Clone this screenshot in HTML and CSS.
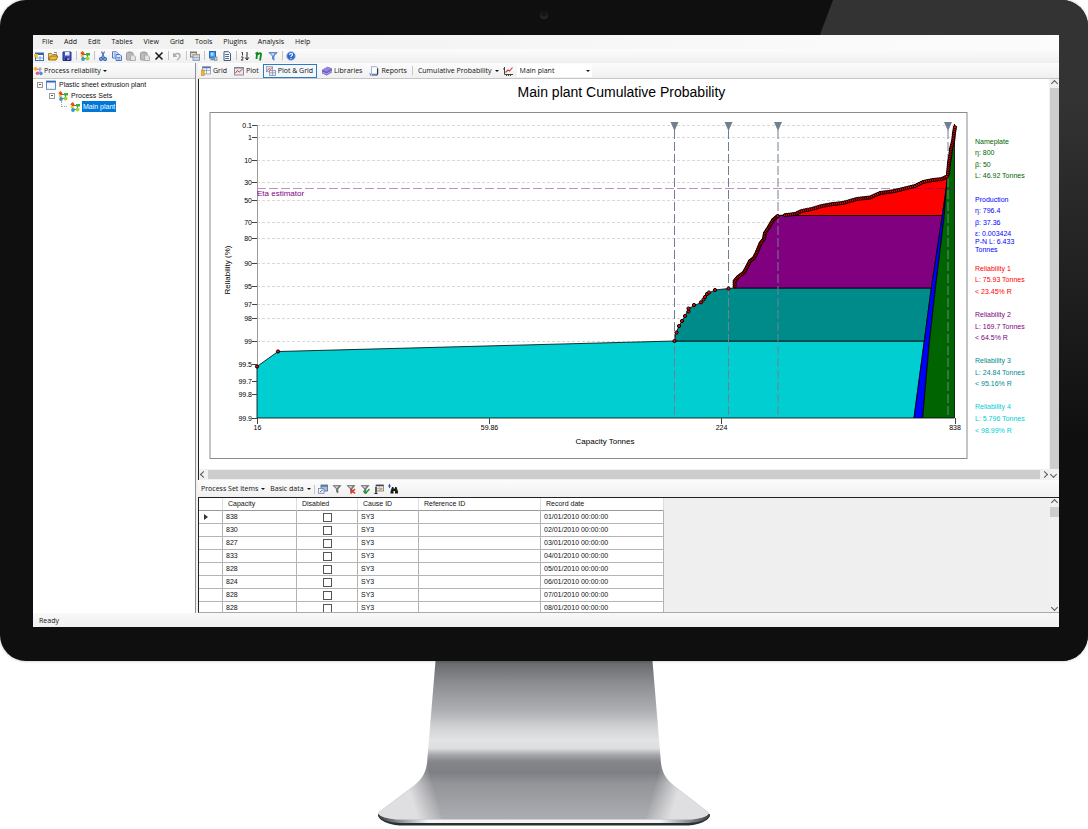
FILE: index.html
```html
<!DOCTYPE html>
<html lang="en">
<head>
<meta charset="utf-8">
<title>Process reliability</title>
<link rel="stylesheet" href="styles.css">
</head>
<body>
<svg class="sprite" aria-hidden="true">
  <symbol id="i-new" viewBox="0 0 10 10"><rect x="1.5" y="2" width="8" height="7.5" fill="#fff" stroke="#4a6fb0"/><path d="M1.5 3h8" stroke="#2f62b8" stroke-width="2"/><path d="M0 3h4v3H0z" fill="#f4c02c"/><path d="M6 5v4M2 7h7" stroke="#7d9dcc"/></symbol>
  <symbol id="i-open" viewBox="0 0 10 10"><path d="M.5 9V2.500h3l1 1h4V5" fill="#f3d27a" stroke="#8a6a1c" stroke-width=".8"/><path d="M.5 9l2-4h7.500l-2 4z" fill="#f7b92c" stroke="#7c5c14" stroke-width=".8"/><path d="M6 1.500h2.500v1" fill="none" stroke="#555" stroke-width=".7"/></symbol>
  <symbol id="i-save" viewBox="0 0 10 10"><path d="M1 1h8v8.500H1z" fill="#4a55c4" stroke="#252c86"/><path d="M3 1h4.500v3.500H3z" fill="#e8ecfa"/><path d="M3 6.500h4V9H3z" fill="#222a66"/><path d="M5.500 7h1v2h-1z" fill="#fff"/></symbol>
  <symbol id="i-flow" viewBox="0 0 10 10"><path d="M2.500 2.500v5h5M2.500 3.500h5v3" fill="none" stroke="#444" stroke-width=".8"/><path d="M2.500 0l2.200 2.200-2.200 2.200L.3 2.200z" fill="#f04a1e"/><rect x=".8" y="4" width="3" height="2" fill="#f6c21a"/><circle cx="3" cy="8" r="1.900" fill="#2a9bd8"/><rect x="6" y="2" width="4" height="2.500" fill="#38b43a"/><circle cx="7.500" cy="7.500" r="2" fill="#9bd43c"/></symbol>
  <symbol id="i-cut" viewBox="0 0 10 10"><path d="M3.500.5l3 6.500M6.500.5l-3 6.500" stroke="#4c6fae" stroke-width="1.200" fill="none"/><circle cx="3" cy="8" r="1.400" fill="none" stroke="#2458b8" stroke-width="1.200"/><circle cx="7" cy="8" r="1.400" fill="none" stroke="#2458b8" stroke-width="1.200"/></symbol>
  <symbol id="i-copy" viewBox="0 0 10 10"><path d="M.5.8h4l1.500 1.500v4.700H.5z" fill="#eaf1fc" stroke="#3d6cc0" stroke-width=".9"/><path d="M4 3.500h4l1.500 1.500v4.500H4z" fill="#dbe8fb" stroke="#3d6cc0" stroke-width=".9"/><path d="M5.300 6.500h3M5.300 8h3M1.800 3h2M1.800 5h1.500" stroke="#3d6cc0" stroke-width=".8"/></symbol>
  <symbol id="i-paste" viewBox="0 0 10 10"><rect x=".5" y="1.500" width="6.500" height="7.500" rx=".7" fill="#bdbdbd" stroke="#9c9c9c"/><rect x="2.200" y=".4" width="3" height="2" fill="#a8a8a8"/><path d="M4.500 4h3l2 2v3.500h-5z" fill="#e4e4e4" stroke="#a0a0a0" stroke-width=".8"/></symbol>
  <symbol id="i-del" viewBox="0 0 10 10"><path d="M1.500 1.500l7 7M8.500 1.500l-7 7" stroke="#1c1c1c" stroke-width="1.600"/></symbol>
  <symbol id="i-undo" viewBox="0 0 10 10"><path d="M2 4.500C4 1.500 8 2 8 5c0 2-1.500 3-3 4" fill="none" stroke="#a9adb5" stroke-width="1.500"/><path d="M1 1.500v4.500h4.500z" fill="#a9adb5"/></symbol>
  <symbol id="i-stack" viewBox="0 0 10 10"><rect x=".5" y="1" width="6" height="5" fill="#ddd" stroke="#777" stroke-width=".9"/><path d="M.5 1.500h6" stroke="#777"/><rect x="3" y="3.500" width="6.500" height="5.800" fill="#d2dcec" stroke="#7b8fae" stroke-width=".9"/><path d="M3 4h6.500" stroke="#d6b35a" stroke-width="1.200"/><path d="M3 6.500h6.500" stroke="#8b9fbe" stroke-width=".8"/></symbol>
  <symbol id="i-server" viewBox="0 0 10 10"><rect x="1.500" y=".5" width="6" height="6.500" fill="#3c9df0" stroke="#1f5fae" stroke-width=".9"/><rect x="2.700" y="1.700" width="2.800" height="3" fill="#a9dcff"/><path d="M3 7.500h4v1.700H2z" fill="#7a8796"/><rect x="6.500" y="6" width="2.500" height="3.500" fill="#c3cbd4" stroke="#7a8796" stroke-width=".7"/></symbol>
  <symbol id="i-page" viewBox="0 0 10 10"><path d="M2 .7h4.500L8.500 2.500v7H2z" fill="#f5f7fa" stroke="#3d4a5c" stroke-width=".9"/><path d="M3.200 3.500h3.800M3.200 5.500h3.800M3.200 7.500h3.800" stroke="#496a9a" stroke-width="1"/></symbol>
  <symbol id="i-sort" viewBox="0 0 10 10"><path d="M1.500 1.500h1V4.500M1.200 6h1.800v1.300L1.200 9H3.300" fill="none" stroke="#222" stroke-width=".9"/><path d="M7 1v7M5.200 6.500L7 9l1.800-2.500" fill="none" stroke="#222" stroke-width="1"/></symbol>
  <symbol id="i-eta" viewBox="0 0 10 10"><path d="M1.500 2.800l1.500-.8L2.500 8M3 4c1.500-2 4.500-2.500 4-.5L6 9.500" fill="none" stroke="#0c8a1e" stroke-width="1.800"/></symbol>
  <symbol id="i-filter" viewBox="0 0 10 10"><path d="M.8 1.500h8.400L6 5v4.200L4.500 8V5z" fill="#6fa0e0" stroke="#4470b4" stroke-width=".7"/><path d="M2.500 2.500h4L5 4.500z" fill="#d6e6fa"/></symbol>
  <symbol id="i-help" viewBox="0 0 10 10"><circle cx="5" cy="5" r="4.300" fill="#2d68c8" stroke="#9bbcec" stroke-width=".8"/><path d="M3.500 4c0-2 3-2 3-.3C6.500 4.700 5 4.700 5 6M5 7v1" fill="none" stroke="#fff" stroke-width="1.100"/></symbol>
  <symbol id="i-rel" viewBox="0 0 10 10"><path d="M3 3l4 1v4" fill="none" stroke="#777" stroke-width=".8"/><path d="M2.500.5l2.300 2.300-2.300 2.300L.2 2.800z" fill="#f4b21c"/><rect x="5.500" y="1.500" width="3" height="2.500" fill="#b9a0d8"/><circle cx="4.500" cy="7.300" r="1.800" fill="#e8559a"/><circle cx="8" cy="7.500" r="1.700" fill="#4a8fe0"/></symbol>
  <symbol id="i-window" viewBox="0 0 10 10"><rect x=".5" y="1" width="9" height="8.300" fill="#f4f8fe" stroke="#5b82bd" stroke-width=".9"/><path d="M.5 1.700h9" stroke="#2a63c0" stroke-width="1.500"/></symbol>
  <symbol id="i-grid" viewBox="0 0 10 10"><rect x="1.500" y=".7" width="8" height="7.300" fill="#f4f6fa" stroke="#8496b4" stroke-width=".8"/><path d="M1.500 1.500h8" stroke="#4d73b8" stroke-width="1.500"/><path d="M5.500 2v6M3 4.500h6.500" stroke="#8496b4" stroke-width=".7"/><path d="M.2 4h3v5.500h-3z" fill="#f5b82a" stroke="#b8821a" stroke-width=".6"/></symbol>
  <symbol id="i-plot" viewBox="0 0 10 10"><rect x=".5" y="1.500" width="9" height="7.500" fill="#e6e8ee" stroke="#7e8798" stroke-width=".9"/><path d="M.5 2h9" stroke="#6c7890"/><path d="M1.500 7l2-2.500 1.800 1.500L8.500 3" fill="none" stroke="#e0332a"/></symbol>
  <symbol id="i-plotgrid" viewBox="0 0 10 10"><rect x=".5" y=".7" width="6" height="5" fill="#e6e8ee" stroke="#8b93a3" stroke-width=".8"/><path d="M1.200 4.500l2-2 1 1 2-2" fill="none" stroke="#e0332a" stroke-width=".9"/><rect x="3.500" y="4.500" width="6" height="5" fill="#e4ebf6" stroke="#8392ac" stroke-width=".8"/><path d="M3.500 6.800h6M6.500 5v4.500" stroke="#8392ac" stroke-width=".7"/></symbol>
  <symbol id="i-lib" viewBox="0 0 10 10"><path d="M0 4L5.500.8 10 2.500v3.800L4.800 9.500 0 7.300z" fill="#6a5cc4"/><path d="M0 4L5.500.8 10 2.500 4.800 5.700z" fill="#9287e0"/><path d="M.5 6.200l4.300 1.800L10 4.800" fill="none" stroke="#dcd8f8" stroke-width=".7"/></symbol>
  <symbol id="i-report" viewBox="0 0 10 10"><path d="M2.500.7h5L9 2v6H2.500z" fill="#fcfdff" stroke="#8293b4" stroke-width=".7"/><path d="M8.500 2.500v6M3 9h5.500" stroke="#25346e" stroke-width="1.100"/><path d="M.5 6.500L3 9.500H1z" fill="#4a76c8"/></symbol>
  <symbol id="i-chart" viewBox="0 0 10 10"><path d="M1.500 1v7.500H10M1.500 3H0M3.500 8v2M5.500 8v2M7.500 8v2" fill="none" stroke="#333" stroke-width=".9"/><path d="M2.500 6.500L5 4l1.500 1L9.500 1.500" fill="none" stroke="#d23b32" stroke-width="1.100"/></symbol>
  <symbol id="i-form" viewBox="0 0 10 10"><rect x="3" y="1" width="6.500" height="6" fill="#a9bfe0" stroke="#51688c" stroke-width=".8"/><path d="M3 2h6.500" stroke="#51688c" stroke-width="1.300"/><rect x=".5" y="4.500" width="5.500" height="4.800" fill="#f2f5fa" stroke="#7189ad" stroke-width=".8"/><path d="M2 8l3-2.500" stroke="#3c78cc"/></symbol>
  <symbol id="i-funnel" viewBox="0 0 10 10"><path d="M1 1.500h8L6 5v4L4.500 8V5z" fill="#777" stroke="#555" stroke-width=".5"/><path d="M2.500 2.300h4L5 4.200z" fill="#ddd"/></symbol>
  <symbol id="i-binoc" viewBox="0 0 10 10"><path d="M1.500 0v4M0 2h3" stroke="#2a5fc4" stroke-width="1.100"/><path d="M4 3h1.500v1.500H7V3h1.500L10 7.500V9.500H7V7H5.500v2.500h-3V7.500z" fill="#1c1c1c"/></symbol>
  <symbol id="i-tablearrow" viewBox="0 0 10 10"><rect x="2" y="1" width="7.500" height="6" fill="#e8ecf2" stroke="#777" stroke-width=".8"/><path d="M2 1.500h7.500" stroke="#445" stroke-width="1.400"/><path d="M5.500 2v5M2 4.500h7.500" stroke="#9ab" stroke-width=".7"/><path d="M2 3v6M.5 9.500h3" stroke="#222" stroke-width="1.200"/><circle cx="7" cy="5" r="1.200" fill="#e6a82a"/></symbol>
</svg>

<div class="monitor">
  <span class="camera"></span>
  <div class="screen">
    <nav class="menubar" aria-label="Main menu">
      <button>File</button><button>Add</button><button>Edit</button><button>Tables</button><button>View</button><button>Grid</button><button>Tools</button><button>Plugins</button><button>Analysis</button><button>Help</button>
    </nav>
    <div class="toolbar main-tools" role="toolbar" aria-label="Main">
      <button class="tool" aria-label="New"><svg><use href="#i-new"/></svg></button>
      <button class="tool" aria-label="Open"><svg><use href="#i-open"/></svg></button>
      <button class="tool" aria-label="Save"><svg><use href="#i-save"/></svg></button>
      <i class="sep"></i>
      <button class="tool" aria-label="Add set"><svg><use href="#i-flow"/></svg></button>
      <i class="sep"></i>
      <button class="tool" aria-label="Cut"><svg><use href="#i-cut"/></svg></button>
      <button class="tool" aria-label="Copy"><svg><use href="#i-copy"/></svg></button>
      <button class="tool" aria-label="Paste"><svg><use href="#i-paste"/></svg></button>
      <button class="tool" aria-label="Paste special"><svg><use href="#i-paste"/></svg></button>
      <button class="tool" aria-label="Delete"><svg><use href="#i-del"/></svg></button>
      <i class="sep"></i>
      <button class="tool" aria-label="Undo"><svg><use href="#i-undo"/></svg></button>
      <i class="sep"></i>
      <button class="tool" aria-label="Windows"><svg><use href="#i-stack"/></svg></button>
      <i class="sep"></i>
      <button class="tool" aria-label="Server"><svg><use href="#i-server"/></svg></button>
      <button class="tool" aria-label="Page"><svg><use href="#i-page"/></svg></button>
      <i class="sep"></i>
      <button class="tool" aria-label="Sort"><svg><use href="#i-sort"/></svg></button>
      <button class="tool" aria-label="Eta"><svg><use href="#i-eta"/></svg></button>
      <button class="tool" aria-label="Filter"><svg><use href="#i-filter"/></svg></button>
      <i class="sep"></i>
      <button class="tool" aria-label="Help"><svg><use href="#i-help"/></svg></button>
    </div>

    <div class="workspace">
      <aside class="sidebar">
        <div class="toolbar pane-tools">
          <button class="item"><svg><use href="#i-rel"/></svg>Process reliability<b class="caret"></b></button>
        </div>
        <ul class="tree">
          <li class="lvl0"><span class="twisty"></span><svg><use href="#i-window"/></svg><span class="node">Plastic sheet extrusion plant</span></li>
          <li class="lvl1"><span class="twisty"></span><svg><use href="#i-flow"/></svg><span class="node">Process Sets</span></li>
          <li class="lvl2"><span class="elbow"></span><svg><use href="#i-flow"/></svg><span class="node selected">Main plant</span></li>
        </ul>
      </aside>

      <main class="content">
        <div class="toolbar pane-tools views">
          <button class="item"><svg><use href="#i-grid"/></svg>Grid</button>
          <button class="item"><svg><use href="#i-plot"/></svg>Plot</button>
          <button class="item active"><svg><use href="#i-plotgrid"/></svg>Plot &amp; Grid</button>
          <button class="item"><svg><use href="#i-lib"/></svg>Libraries</button>
          <button class="item"><svg><use href="#i-report"/></svg>Reports</button>
          <i class="sep"></i>
          <button class="item">Cumulative Probability<b class="caret"></b></button>
          <button class="tool" aria-label="Chart options"><svg><use href="#i-chart"/></svg></button>
          <span class="picker"><select aria-label="Process set"><option>Main plant</option></select><b class="caret"></b></span>
        </div>

        <section class="plot-pane">
          <svg class="chart" viewBox="199 79 850 390" role="img" aria-label="Main plant Cumulative Probability">
            <text class="chart-title" x="621.500" y="97" text-anchor="middle">Main plant Cumulative Probability</text>
            <rect class="frame" x="210" y="112.500" width="757" height="346"/>
            <g id="gridlines"></g>
            <path class="eta" d="M257 188.500H955"/>
            <path class="axis" d="M257.500 125V422"/>
            <g class="region">
              <path fill="#00ced1" d="M257 366.500L278 351.500L674.500 341H924.300L914 418H257z"/>
              <path fill="#008b8b" d="M674.500 341L676 333L679 326L682 321L685 316L688.500 308.500L701 302.500L707 294L715 290L728.500 288.500L735 288H931.300L924.300 341z"/>
              <path fill="#800080" d="M733 288L735 281L744 272.500L750 261L757 252L765 233L778 215.500H942.300L931.300 288z"/>
              <path fill="#ff0000" d="M778 215.500L795 214L822 206L843 203L870 197.500L907 188L923 182L946.700 177V186L942.300 215.500z"/>
              <path fill="#0000ff" d="M914 418L924.300 341L931.300 288L942.300 215.500L947 182L944.300 215.500L935.500 288L929.500 341L922.700 418z"/>
              <path fill="#006400" d="M922.700 418L929.500 341L935.500 288L944.300 215.500L947 178L951 149L954.500 124V418z"/>
            </g>
            <g class="markers">
              <path d="M674.500 130V418M728.500 130V418M778 130V418M948 130V418"/>
              <path class="flag" d="M670.500 122h8l-4 9zM724.500 122h8l-4 9zM774 122h8l-4 9zM944 122h8l-4 9z"/>
            </g>
            <path class="eta faint" d="M900 188.500H955"/>
            <g id="points"></g>
            <g id="ticks"></g>
            <text class="note" x="257" y="196">Eta estimator</text>
            <text class="axis-name" x="605" y="444" text-anchor="middle">Capacity Tonnes</text>
            <text class="axis-name" transform="translate(230 270) rotate(-90)" text-anchor="middle">Reliability (%)</text>
            <g class="legend">
              <g fill="#006400"><text x="975" y="144">Nameplate</text><text x="975" y="155">η: 800</text><text x="975" y="167">β: 50</text><text x="975" y="178">L: 46.92 Tonnes</text></g>
              <g fill="#0000ff"><text x="975" y="202">Production</text><text x="975" y="213">η: 796.4</text><text x="975" y="225">β: 37.36</text><text x="975" y="236">ε: 0.003424</text><text x="975" y="244">P-N L: 6.433</text><text x="975" y="252">Tonnes</text></g>
              <g fill="#ff0000"><text x="975" y="271">Reliability 1</text><text x="975" y="282">L: 75.93 Tonnes</text><text x="975" y="294">&lt; 23.45% R</text></g>
              <g fill="#800080"><text x="975" y="317">Reliability 2</text><text x="975" y="329">L: 169.7 Tonnes</text><text x="975" y="340">&lt; 64.5% R</text></g>
              <g fill="#008b8b"><text x="975" y="363">Reliability 3</text><text x="975" y="375">L: 24.84 Tonnes</text><text x="975" y="386">&lt; 95.16% R</text></g>
              <g fill="#00ced1"><text x="975" y="409">Reliability 4</text><text x="975" y="421">L: 5.796 Tonnes</text><text x="975" y="433">&lt; 98.99% R</text></g>
            </g>
          </svg>
          <div class="vscroll tall"><i class="arrow up"></i><i class="thumb"></i></div>
          <div class="hscroll"><i class="arrow left"></i><i class="thumb"></i><i class="arrow right"></i></div>
          <div class="corner"><i class="arrow down"></i></div>
        </section>

        <div class="toolbar table-tools">
          <button class="item">Process Set Items<b class="caret"></b></button>
          <button class="item">Basic data<b class="caret"></b></button>
          <i class="sep"></i>
          <button class="tool" aria-label="Form"><svg><use href="#i-form"/></svg></button>
          <button class="tool" aria-label="Filter"><svg><use href="#i-funnel"/></svg></button>
          <button class="tool" aria-label="Remove filter"><svg viewBox="0 0 10 10"><use href="#i-funnel"/><path d="M4.500 5l4.500 4.500M9 5L4.500 9.500" stroke="#e23a1e" stroke-width="1.500"/></svg></button>
          <button class="tool" aria-label="Apply filter"><svg viewBox="0 0 10 10"><use href="#i-funnel"/><path d="M3.500 7l2 2.500 4-4.500" fill="none" stroke="#18a03c" stroke-width="1.500"/></svg></button>
          <button class="tool" aria-label="Columns"><svg><use href="#i-tablearrow"/></svg></button>
          <button class="tool" aria-label="Find"><svg><use href="#i-binoc"/></svg></button>
        </div>

        <section class="table-pane">
          <div class="table-wrap">
            <table>
              <colgroup><col class="c-head"><col class="c-cap"><col class="c-dis"><col class="c-cause"><col class="c-ref"><col class="c-date"></colgroup>
              <thead><tr><th></th><th>Capacity</th><th>Disabled</th><th>Cause ID</th><th>Reference ID</th><th>Record date</th></tr></thead>
              <tbody>
                <tr><td><i class="current"></i></td><td>838</td><td><input type="checkbox" aria-label="Disabled, row 1"></td><td>SY3</td><td></td><td>01/01/2010 00:00:00</td></tr>
                <tr><td></td><td>830</td><td><input type="checkbox" aria-label="Disabled, row 2"></td><td>SY3</td><td></td><td>02/01/2010 00:00:00</td></tr>
                <tr><td></td><td>827</td><td><input type="checkbox" aria-label="Disabled, row 3"></td><td>SY3</td><td></td><td>03/01/2010 00:00:00</td></tr>
                <tr><td></td><td>833</td><td><input type="checkbox" aria-label="Disabled, row 4"></td><td>SY3</td><td></td><td>04/01/2010 00:00:00</td></tr>
                <tr><td></td><td>828</td><td><input type="checkbox" aria-label="Disabled, row 5"></td><td>SY3</td><td></td><td>05/01/2010 00:00:00</td></tr>
                <tr><td></td><td>824</td><td><input type="checkbox" aria-label="Disabled, row 6"></td><td>SY3</td><td></td><td>06/01/2010 00:00:00</td></tr>
                <tr><td></td><td>828</td><td><input type="checkbox" aria-label="Disabled, row 7"></td><td>SY3</td><td></td><td>07/01/2010 00:00:00</td></tr>
                <tr><td></td><td>828</td><td><input type="checkbox" aria-label="Disabled, row 8"></td><td>SY3</td><td></td><td>08/01/2010 00:00:00</td></tr>
              </tbody>
            </table>
          </div>
          <div class="vscroll short"><i class="arrow up"></i><i class="thumb"></i><i class="arrow down"></i></div>
        </section>
      </main>
    </div>
    <footer class="status">Ready</footer>
  </div>
</div>

<svg class="stand" viewBox="369 661 350 168" aria-hidden="true">
  <defs>
    <linearGradient id="metal" x1="0" y1="661" x2="0" y2="820" gradientUnits="userSpaceOnUse">
      <stop offset="0" stop-color="#66676b"/><stop offset=".06" stop-color="#77787c"/><stop offset=".14" stop-color="#8c8d91"/><stop offset=".32" stop-color="#b0b1b5"/><stop offset=".42" stop-color="#d2d3d5"/><stop offset=".5" stop-color="#e2e3e5"/><stop offset=".55" stop-color="#dcdddf"/><stop offset=".59" stop-color="#a5a7aa"/><stop offset=".63" stop-color="#85878b"/><stop offset=".7" stop-color="#7d7f84"/><stop offset=".77" stop-color="#939498"/><stop offset="1" stop-color="#adaeb3"/>
    </linearGradient>
    <linearGradient id="wingL" x1="412" y1="800" x2="436" y2="793" gradientUnits="userSpaceOnUse"><stop offset="0" stop-color="#dfdfe1"/><stop offset="1" stop-color="#dfdfe1" stop-opacity="0"/></linearGradient>
    <linearGradient id="wingR" x1="676" y1="800" x2="652" y2="793" gradientUnits="userSpaceOnUse"><stop offset="0" stop-color="#dfdfe1"/><stop offset="1" stop-color="#dfdfe1" stop-opacity="0"/></linearGradient>
    <linearGradient id="rim" x1="378" y1="0" x2="710" y2="0" gradientUnits="userSpaceOnUse"><stop offset="0" stop-color="#3c3d44"/><stop offset=".06" stop-color="#85868c"/><stop offset=".15" stop-color="#f4f4f5"/><stop offset=".85" stop-color="#f4f4f5"/><stop offset=".94" stop-color="#85868c"/><stop offset="1" stop-color="#3c3d44"/></linearGradient>
    <path id="foot" d="M435.500 661H652.500L660.500 757C661 770 664 777 673 785L708 812C711 815 702 819.500 686 819.500H402C386 819.500 376 815 379 812L415 785C424 777 427 770 427.500 757z"/>
    <clipPath id="foot-clip"><use href="#foot"/></clipPath>
  </defs>
  <path fill="#2a2f2f" d="M378 815C378 820 389 825.500 402 825.500H686C699 825.500 710 820 710 815z"/>
  <path fill="url(#rim)" d="M378 814C378 819 389 823 402 823H686C699 823 710 819 710 814z"/>
  <use href="#foot" fill="url(#metal)"/>
  <g clip-path="url(#foot-clip)">
    <path fill="url(#wingL)" d="M428 766L442 820H370V790z"/>
    <path fill="url(#wingR)" d="M660 766L646 820H718V790z"/>
  </g>
</svg>
<script src="chart.js"></script>
</body>
</html>
```
FILE: chart.js
```js
const NS = 'http://www.w3.org/2000/svg';

function add(parent, name, attrs, text) {
  const node = document.createElementNS(NS, name);
  for (const key in attrs) node.setAttribute(key, attrs[key]);
  if (text) node.textContent = text;
  parent.appendChild(node);
}

const yTicks = [
  ['0.1', 125], ['1', 137.5], ['10', 160.5], ['30', 182.5], ['50', 200.5],
  ['70', 222.5], ['80', 238.5], ['90', 263.5], ['95', 286.5], ['97', 304.5],
  ['98', 318.5], ['99', 341], ['99.5', 364.5], ['99.7', 381.5],
  ['99.8', 394.5], ['99.9', 418]
];
const xTicks = [['16', 257.5], ['59.86', 489.5], ['224', 721.5], ['838', 955]];

const gridlines = document.getElementById('gridlines');
const ticks = document.getElementById('ticks');
for (const [label, y] of yTicks) {
  if (y < 342) add(gridlines, 'path', { d: `M257 ${y}H955` });
  add(ticks, 'path', { d: `M252 ${y}H257` });
  add(ticks, 'text', { x: 252, y: y + 2.5, 'text-anchor': 'end' }, label);
}
for (const [label, x] of xTicks) {
  add(ticks, 'path', { d: `M${x} 418V424` });
  add(ticks, 'text', { x: x, y: 430, 'text-anchor': 'middle' }, label);
}

const points = document.getElementById('points');
const dot = (x, y) => add(points, 'circle', { cx: x, cy: y, r: 1.6 });

const sparse = [
  [257, 366.5], [278, 351.5], [674.5, 341], [676.5, 332.5], [679, 326],
  [682, 321], [685, 316], [688.5, 311.5], [688.5, 308.5], [694, 305], [701, 302.3],
  [703.5, 299.5], [705, 297], [707, 294], [709, 292.5], [715, 290], [728.5, 288.5]
];
sparse.forEach(([x, y]) => dot(x, y));

/* Dense runs: measured corners filled in at the given spacing. */
const runs = [
  [1.7, [[734.7, 286], [734.7, 281], [738, 277], [744, 272.5], [747, 267], [750, 261], [754, 258],
    [757, 252], [760.7, 243], [764, 239], [765, 233], [769, 227], [773, 220], [777.7, 216]]],
  [2, [[785, 215.2], [795, 214], [801.7, 211], [811.7, 209], [821.7, 206], [833, 204], [843, 203],
    [856.7, 199], [870, 197.5], [880, 193], [895, 191], [906.7, 188], [915, 186], [923, 182],
    [933, 180], [941.7, 179], [946.7, 176.7]]],
  [2, [[948, 174], [949, 163], [950, 158], [951, 149], [953.3, 140], [954, 133], [955, 127.3]]]
];
for (const [step, corners] of runs) {
  for (let i = 1; i < corners.length; i++) {
    const [x0, y0] = corners[i - 1];
    const [x1, y1] = corners[i];
    const n = Math.max(1, Math.round(Math.hypot(x1 - x0, y1 - y0) / step));
    for (let k = 0; k < n; k++) dot(x0 + (x1 - x0) * k / n, y0 + (y1 - y0) * k / n);
  }
  dot(...corners[corners.length - 1]);
}
```
FILE: styles.css
```css
* { box-sizing: border-box; }
body { margin: 0; background: #fff; color: #111; font: 7px/10px "Open Sans", "Noto Sans", sans-serif; }
button, select, input { font: inherit; color: inherit; margin: 0; }
button { display: flex; align-items: center; padding: 0; border: 1px solid transparent; background: none; white-space: nowrap; }
.sprite { display: none; }

.monitor { position: relative; padding: 35px 29px 34px 33px; border-radius: 26px; background: #0f0f0f; box-shadow: 0 0 3px rgba(0, 0, 0, .3); overflow: hidden; }
.monitor::before { content: ""; position: absolute; top: 0; right: 0; bottom: 0; width: 270px; background: linear-gradient(#333 100px, #0f0f0f 440px); clip-path: polygon(15px 0, 100% 0, 100% 100%, 0 100%, 0 40px); }
.camera { position: absolute; top: 11px; left: 50%; width: 8px; height: 8px; margin-left: -4px; border-radius: 50%; background: radial-gradient(circle at 50% 30%, #151515 30%, #3a3a3a); }
.screen { position: relative; background: #f0f0f0; }

.menubar { display: flex; gap: 9px; height: 14px; padding-left: 8px; background: linear-gradient(90deg, #f0f0f0, #fcfcfc); }
.toolbar { display: flex; align-items: center; background: linear-gradient(#fcfcfc, #f0f0f0); }
.main-tools { height: 13px; }
.tool { flex: none; justify-content: center; width: 14px; height: 12px; }
.main-tools .tool { justify-content: flex-start; }
.toolbar svg, .tree svg { flex: none; width: 10px; height: 10px; }
.sep { flex: none; width: 1px; height: 9px; margin: 0 2px 0 1px; background: #c4c4c4; }
.item { gap: 2px; height: 14px; padding: 0 1px 0 2px; }
.caret { width: 0; height: 0; margin-left: 1px; border: 2px solid transparent; border-top-color: #111; border-bottom: 0; }

.workspace { display: grid; grid-template-columns: 163px minmax(0, 1fr); column-gap: 2px; padding-top: 1px; }
.sidebar { display: flex; flex-direction: column; border-right: 1px solid #8e9097; }
.pane-tools { height: 16px; border-bottom: 1px solid #c6c6c6; }
.sidebar .item { gap: 1px; padding: 0; border-left: 0; }
.tree { flex: 1; margin: 0; padding: 0 0 0 4px; list-style: none; background: #fff; font: 7px/11px "Liberation Sans", Arial, sans-serif; }
.tree li { display: flex; align-items: center; height: 11px; gap: 3px; white-space: nowrap; }
.tree svg + .node { margin-left: -1px; }
.lvl1 { padding-left: 12px; }
.lvl2 { padding-left: 24px; }
.twisty { position: relative; width: 6px; height: 6px; border: 1px solid #999; background: #fff; }
.twisty::after { content: ""; position: absolute; left: 1px; right: 1px; top: 1px; border-top: 1px solid #555; }
.elbow { width: 6px; height: 6px; align-self: flex-start; border: dotted #aaa; border-width: 0 0 1px 1px; }
.node { padding: 0 1px; }
.selected { background: #0078d7; color: #fff; }

.views .item + .item { margin-left: 2px; }
.views .active { border-color: #2a7bc0; background: #f4f8fc; padding: 0 3px 0 2px; }
.views .sep { margin: 0 2px 0 3px; }
.picker { display: flex; align-items: center; width: 75px; height: 13px; margin-left: 2px; padding-right: 2px; background: #fff; }
.picker select { flex: 1; min-width: 0; padding: 0 0 0 3px; border: 0; appearance: none; background: none; }

.plot-pane { display: grid; grid-template-columns: minmax(0, 1fr) 10px; border-left: 1px solid #222; background: #fff; }
.chart { display: block; width: 100%; height: auto; font-family: "Liberation Sans", Arial, sans-serif; }
.chart-title { font-size: 14px; }
.frame { fill: none; stroke: #8c8c8c; }
.axis { stroke: #999; }
.eta { stroke: #a040a0; stroke-opacity: .6; stroke-dasharray: 9 3; fill: none; }
.faint { stroke: #800080; stroke-opacity: .5; }
.note { font-size: 8px; fill: #800080; }
.axis-name { font-size: 8px; }
#gridlines { stroke: #d9d9d9; stroke-dasharray: 3 2; shape-rendering: crispEdges; }
#ticks { font-size: 7px; }
#ticks path { stroke: #444; shape-rendering: crispEdges; }
.region path { stroke: #000; stroke-opacity: .8; }
.markers path { fill: none; stroke: #708090; stroke-dasharray: 9 3; }
.markers .flag { fill: #708090; stroke: none; }
#points circle { fill: #f00; stroke: #000; stroke-width: 1px; }
.legend { font-size: 7px; }

.vscroll, .hscroll, .corner { display: flex; align-items: center; background: #f0f0f0; }
.vscroll { flex-direction: column; }
.thumb { background: #cdcdcd; }
.arrow { flex: none; display: grid; place-items: center; width: 9px; height: 9px; }
.arrow::before { content: ""; width: 4px; height: 4px; border: solid #555; border-width: 1px 0 0 1px; transform: rotate(45deg); }
.arrow.down { transform: rotate(180deg); }
.arrow.left { transform: rotate(-90deg); }
.arrow.right { transform: rotate(90deg); }
.tall .thumb { flex: 1; width: 9px; }
.hscroll { height: 11px; }
.hscroll .thumb { flex: 1; height: 9px; }

.table-tools { height: 17px; padding-top: 1px; }
.table-tools .sep { margin: 0 1px; }
.table-pane { display: flex; height: 116px; border-top: 1px solid #222; border-left: 1px solid #222; border-bottom: 1px solid #aaa; background: #efefef; }
.table-wrap { flex: 1; min-width: 0; overflow: hidden; }
table { width: 465px; table-layout: fixed; border-collapse: separate; border-spacing: 0; background: #fff; font: 7px/10px "Liberation Sans", Arial, sans-serif; }
.c-head { width: 24px; } .c-cap { width: 74px; } .c-dis { width: 61px; } .c-cause { width: 61px; } .c-ref { width: 122px; } .c-date { width: 123px; }
th { height: 13px; padding: 0 5px; font-weight: 400; text-align: left; border-right: 1px solid #ddd; border-bottom: 1px solid #999; }
td { height: 13px; padding: 0 3px; border-right: 1px solid #b4b4b4; border-bottom: 1px solid #b4b4b4; white-space: nowrap; }
td:nth-child(3) { text-align: center; }
td:first-child { padding-left: 5px; }
input[type="checkbox"] { display: block; width: 9px; height: 9px; margin: 0 auto; appearance: none; border: 1px solid #555; background: #fff; }
.current { display: block; width: 0; height: 0; border: 3px solid transparent; border-left: 4px solid #333; border-right: 0; }
.short { width: 10px; }
.short .thumb { width: 9px; height: 10px; margin-bottom: auto; }

.status { height: 14px; padding: 3px 6px 0; background: linear-gradient(#f8f8f8, #f0f0f0); }
.stand { display: block; width: 350px; height: 168px; margin: 0 auto; }
```
